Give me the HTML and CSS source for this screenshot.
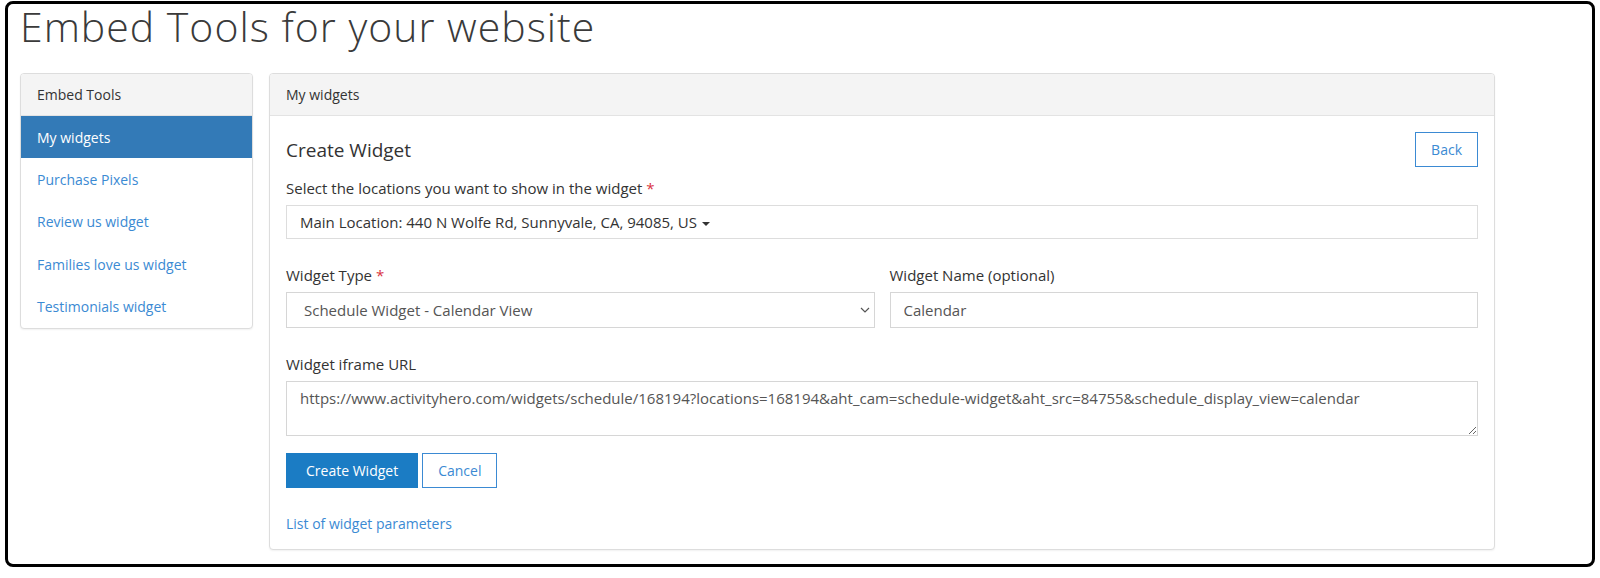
FILE: index.html
```html
<!DOCTYPE html>
<html lang="en">

<head>
    <meta charset="UTF-8">
    <meta name="viewport" content="width=device-width, initial-scale=1.0">
    <title>Embed Tools for your website</title>
    <link rel="stylesheet" href="styles.css">
</head>

<body>
    <div class="frame">
        <h1 class="page-title">Embed Tools for your website</h1>

        <div class="layout">
            <!-- Sidebar -->
            <div class="panel sidebar">
                <div class="panel-heading">Embed Tools</div>
                <ul class="side-nav">
                    <li class="active"><a href="#">My widgets</a></li>
                    <li><a href="#">Purchase Pixels</a></li>
                    <li><a href="#">Review us widget</a></li>
                    <li><a href="#">Families love us widget</a></li>
                    <li><a href="#">Testimonials widget</a></li>
                </ul>
            </div>

            <!-- Main panel -->
            <div class="panel main">
                <div class="panel-heading">My widgets</div>
                <div class="panel-body">
                    <div class="title-row">
                        <h3>Create Widget</h3>
                        <a href="#" class="btn btn-outline">Back</a>
                    </div>

                    <div class="field">
                        <label>Select the locations you want to show in the widget <span class="req">*</span></label>
                        <button class="multi-select">Main Location: 440 N Wolfe Rd, Sunnyvale, CA, 94085, US <span class="caret"></span></button>
                    </div>

                    <div class="field-row">
                        <div class="field">
                            <label>Widget Type <span class="req">*</span></label>
                            <div class="select-wrap">
                                <select class="form-control">
                                    <option>Schedule Widget - Calendar View</option>
                                    <option>Schedule Widget - List View</option>
                                </select>
                                <svg class="chevron" width="10" height="6" viewBox="0 0 10 6">
                                    <path d="M1 1l4 4 4-4" fill="none" stroke="#555" stroke-width="1.2" />
                                </svg>
                            </div>
                        </div>
                        <div class="field">
                            <label>Widget Name (optional)</label>
                            <input class="form-control" type="text" value="Calendar">
                        </div>
                    </div>

                    <div class="field field-last">
                        <label>Widget iframe URL</label>
                        <textarea class="form-control url-box">https://www.activityhero.com/widgets/schedule/168194?locations=168194&amp;aht_cam=schedule-widget&amp;aht_src=84755&amp;schedule_display_view=calendar</textarea>
                    </div>

                    <div class="actions">
                        <a href="#" class="btn btn-primary">Create Widget</a>
                        <a href="#" class="btn btn-outline">Cancel</a>
                    </div>

                    <a href="#" class="params-link">List of widget parameters</a>
                </div>
            </div>
        </div>
    </div>
</body>

</html>
```

FILE: styles.css
```css
* {
    box-sizing: border-box;
}

body {
    margin: 0;
    background: #fff;
    font-family: "Open Sans", Arial, sans-serif;
    font-size: 14px;
    color: #333;
}

a {
    color: #3b8ad3;
    text-decoration: none;
}

.frame {
    margin: 1px 5px 0;
    height: 566px;
    border: 3px solid #000;
    border-radius: 8px;
    padding: 0 12px;
}

.page-title {
    margin: 0;
    padding-top: 0;
    font-size: 41px;
    font-weight: 300;
    letter-spacing: 1px;
    line-height: 44px;
    color: #3a3a3a;
}

.layout {
    display: flex;
    align-items: flex-start;
    gap: 16px;
    margin-top: 25px;
}

.panel {
    background: #fff;
    border: 1px solid #ddd;
    border-radius: 4px;
    box-shadow: 0 1px 2px rgba(0, 0, 0, 0.06);
    overflow: hidden;
}

.panel-heading {
    height: 42px;
    padding: 0 16px;
    display: flex;
    align-items: center;
    background: #f4f4f4;
    border-bottom: 1px solid #e3e3e3;
    color: #333;
}

.sidebar {
    width: 233px;
}

.side-nav {
    list-style: none;
    margin: 0;
    padding: 0;
}

.side-nav li a {
    display: flex;
    align-items: center;
    height: 42.4px;
    padding: 0 16px;
}

.side-nav li.active a {
    background: #337ab7;
    color: #fff;
}

.main {
    width: 1226px;
}

.panel-body {
    padding: 16px 16px 15px;
}

.title-row {
    display: flex;
    align-items: center;
    justify-content: space-between;
    margin-bottom: 11px;
}

.title-row h3 {
    margin: 0;
    font-size: 19px;
    font-weight: 400;
    color: #333;
}

.btn {
    display: inline-flex;
    align-items: center;
    height: 35px;
    padding: 0 15px;
    border: 1px solid #3b8ad3;
    font-size: 14px;
}

.btn-outline {
    background: #fff;
    color: #3b8ad3;
}

.btn-primary {
    background: #1b7cc4;
    border-color: #1b7cc4;
    color: #fff;
    padding: 0 19px;
}

.field {
    margin-bottom: 26px;
}

.field label {
    display: block;
    line-height: 20px;
    margin-bottom: 7px;
    font-size: 15px;
    font-weight: 500;
    color: #333;
}

.req {
    color: #d9333f;
}

.multi-select {
    display: block;
    width: 100%;
    height: 34px;
    padding: 0 13px;
    text-align: left;
    background: #fff;
    border: 1px solid #ddd;
    font-family: inherit;
    font-size: 15px;
    color: #333;
}

.caret {
    display: inline-block;
    vertical-align: middle;
    margin-left: 1px;
    border-top: 4px solid #333;
    border-left: 4px solid transparent;
    border-right: 4px solid transparent;
}

.field-row {
    display: flex;
    gap: 15px;
}

.field-row .field {
    flex: 1;
}

.form-control {
    display: block;
    width: 100%;
    height: 36px;
    padding: 0 13px;
    background: #fff;
    border: 1px solid #d6d6d6;
    border-radius: 0;
    font-family: inherit;
    font-size: 15px;
    color: #555;
}

.select-wrap {
    position: relative;
}

.select-wrap select {
    appearance: none;
    padding: 0 17px;
}

.chevron {
    position: absolute;
    right: 5px;
    top: 15px;
}

.url-box {
    height: 55px;
    padding: 6px 13px;
    resize: vertical;
    line-height: 20px;
}

.field-last {
    margin-bottom: 17px;
}

.actions {
    display: flex;
    gap: 4px;
    margin-bottom: 26px;
}

.params-link {
    display: block;
    line-height: 20px;
}
```
